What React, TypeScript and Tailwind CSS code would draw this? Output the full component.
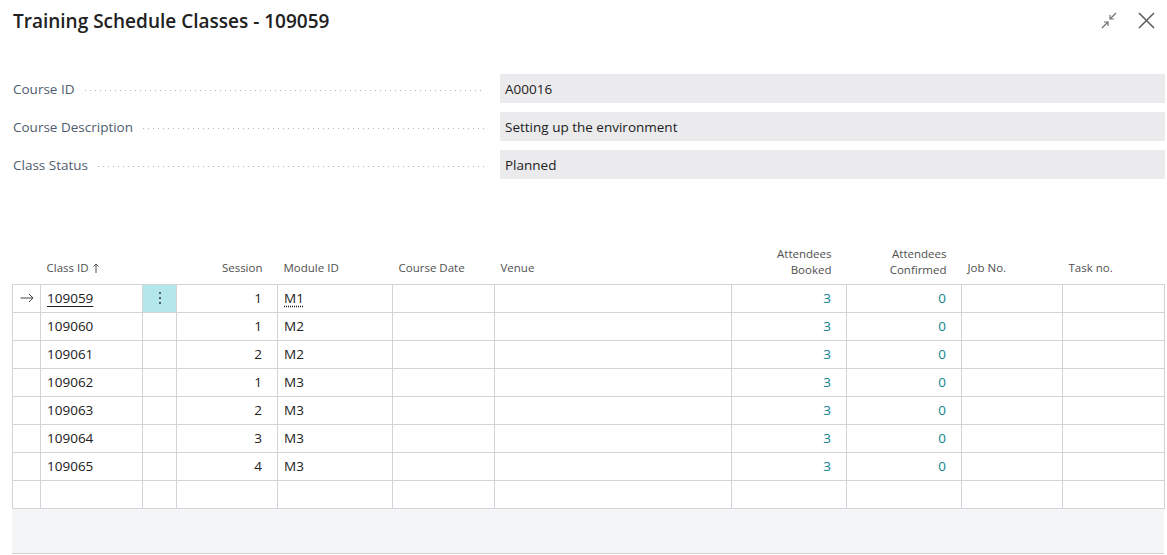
import React from "react";

const font = { fontFamily: '"Segoe UI", "Open Sans", "Noto Sans", sans-serif' };

const rows = [
  { id: "109059", session: 1, module: "M1", booked: 3, confirmed: 0, active: true },
  { id: "109060", session: 1, module: "M2", booked: 3, confirmed: 0 },
  { id: "109061", session: 2, module: "M2", booked: 3, confirmed: 0 },
  { id: "109062", session: 1, module: "M3", booked: 3, confirmed: 0 },
  { id: "109063", session: 2, module: "M3", booked: 3, confirmed: 0 },
  { id: "109064", session: 3, module: "M3", booked: 3, confirmed: 0 },
  { id: "109065", session: 4, module: "M3", booked: 3, confirmed: 0 },
];

const widths = [28, 102, 34, 101, 115, 102, 237, 115, 115, 101, 102];

function Field({ label, value }: { label: string; value: string }) {
  return (
    <div className="flex items-center h-[29px]">
      <div className="w-[472px] flex items-center shrink-0 pt-[1px]">
        <span className="text-[13.5px] text-[#505c6d] whitespace-nowrap">{label}</span>
        <span className="flex-1 ml-[10px] mt-[3px] h-px bg-[repeating-linear-gradient(to_right,#b4b4b4_0_1px,transparent_1px_5px)]" />
      </div>
      <div className="ml-[15px] flex-1 h-[29px] bg-[#ebebed] flex items-center pl-[5px] pt-[1px] text-[13.5px] text-[#212121]">
        {value}
      </div>
    </div>
  );
}

export default function App() {
  const cell = "border border-[#d3d3d8] h-[28px] p-0";
  return (
    <div className="w-[1167px] h-[555px] bg-white overflow-hidden relative" style={font}>
      <div className="flex items-start justify-between pl-[13px] pr-[12px] pt-[8px] h-[74px]">
        <h1 className="text-[19px] font-semibold text-[#212121] leading-[26px]">
          Training Schedule Classes - 109059
        </h1>
        <div className="flex items-center gap-[21px] pt-[4px]">
          <svg width="16" height="17" viewBox="0 0 16 17" fill="none" stroke="#6a6a6a" strokeWidth="1.1">
            <path d="M15 1 L9 7" />
            <path d="M9 3 L9 7 L13 7" />
            <path d="M1 16 L7 10" />
            <path d="M3 10 L7 10 L7 14" />
          </svg>
          <svg width="17" height="17" viewBox="0 0 17 17" fill="none" stroke="#5a5a5a" strokeWidth="1.5">
            <path d="M1 1 L16 16 M16 1 L1 16" />
          </svg>
        </div>
      </div>

      <div className="pl-[13px] pr-[2px] flex flex-col gap-[9px]">
        <Field label="Course ID" value="A00016" />
        <Field label="Course Description" value="Setting up the environment" />
        <Field label="Class Status" value="Planned" />
      </div>

      <div className="ml-[12px] mt-[65px] w-[1152px]">
        <table className="table-fixed border-collapse w-[1152px] text-[13.5px] text-[#212121]">
          <colgroup>
            {widths.map((w, i) => (
              <col key={i} style={{ width: w }} />
            ))}
          </colgroup>
          <thead>
            <tr className="h-[40px] text-[11.5px] text-[#505050] leading-[16px] align-bottom">
              <th className="font-normal pb-[7px]"></th>
              <th className="font-normal text-left pl-[6px] pb-[8px]">
                <span className="inline-flex items-center gap-[4px]">
                  Class ID
                  <svg width="6" height="10" viewBox="0 0 6 10" fill="none" stroke="#505050" strokeWidth="1">
                    <path d="M3 1 V10 M0.5 3.5 L3 1 L5.5 3.5" />
                  </svg>
                </span>
              </th>
              <th className="font-normal pb-[7px]"></th>
              <th className="font-normal text-right pr-[15px] pb-[8px]">Session</th>
              <th className="font-normal text-left pl-[6px] pb-[8px]">Module ID</th>
              <th className="font-normal text-left pl-[6px] pb-[8px]">Course Date</th>
              <th className="font-normal text-left pl-[6px] pb-[8px]">Venue</th>
              <th className="font-normal text-right pr-[15px] pb-[6px]">Attendees<br />Booked</th>
              <th className="font-normal text-right pr-[15px] pb-[6px]">Attendees<br />Confirmed</th>
              <th className="font-normal text-left pl-[6px] pb-[8px]">Job No.</th>
              <th className="font-normal text-left pl-[6px] pb-[8px]">Task no.</th>
            </tr>
          </thead>
          <tbody>
            {rows.map((r) => (
              <tr key={r.id}>
                <td className={cell}>
                  {r.active && (
                    <div className="flex justify-center">
                      <svg width="14" height="10" viewBox="0 0 14 10" fill="none" stroke="#444" strokeWidth="1">
                        <path d="M0.5 5 H13 M9 1 L13 5 L9 9" />
                      </svg>
                    </div>
                  )}
                </td>
                <td className={`${cell} pl-[6px]`}>
                  <span className={r.active ? "underline underline-offset-[3px] decoration-[#212121]" : ""}>{r.id}</span>
                </td>
                <td className={`${cell} ${r.active ? "bg-[#b4e7ec]" : ""}`}>
                  {r.active && (
                    <div className="flex flex-col items-center gap-[3px]">
                      <span className="w-[2px] h-[2px] rounded-full bg-[#333]" />
                      <span className="w-[2px] h-[2px] rounded-full bg-[#333]" />
                      <span className="w-[2px] h-[2px] rounded-full bg-[#333]" />
                    </div>
                  )}
                </td>
                <td className={`${cell} text-right pr-[15px]`}>{r.session}</td>
                <td className={`${cell} pl-[6px]`}>
                  <span className={r.active ? "underline decoration-dotted underline-offset-[3px]" : ""}>{r.module}</span>
                </td>
                <td className={cell}></td>
                <td className={cell}></td>
                <td className={`${cell} text-right pr-[15px] text-[#10848a]`}>{r.booked}</td>
                <td className={`${cell} text-right pr-[15px] text-[#10848a]`}>{r.confirmed}</td>
                <td className={cell}></td>
                <td className={cell}></td>
              </tr>
            ))}
            <tr>
              {widths.map((_, i) => (
                <td key={i} className={cell}></td>
              ))}
            </tr>
          </tbody>
        </table>
        <div className="h-[45px] bg-[#f4f5f7] border-b border-[#d3d3d8]" />
      </div>
    </div>
  );
}
